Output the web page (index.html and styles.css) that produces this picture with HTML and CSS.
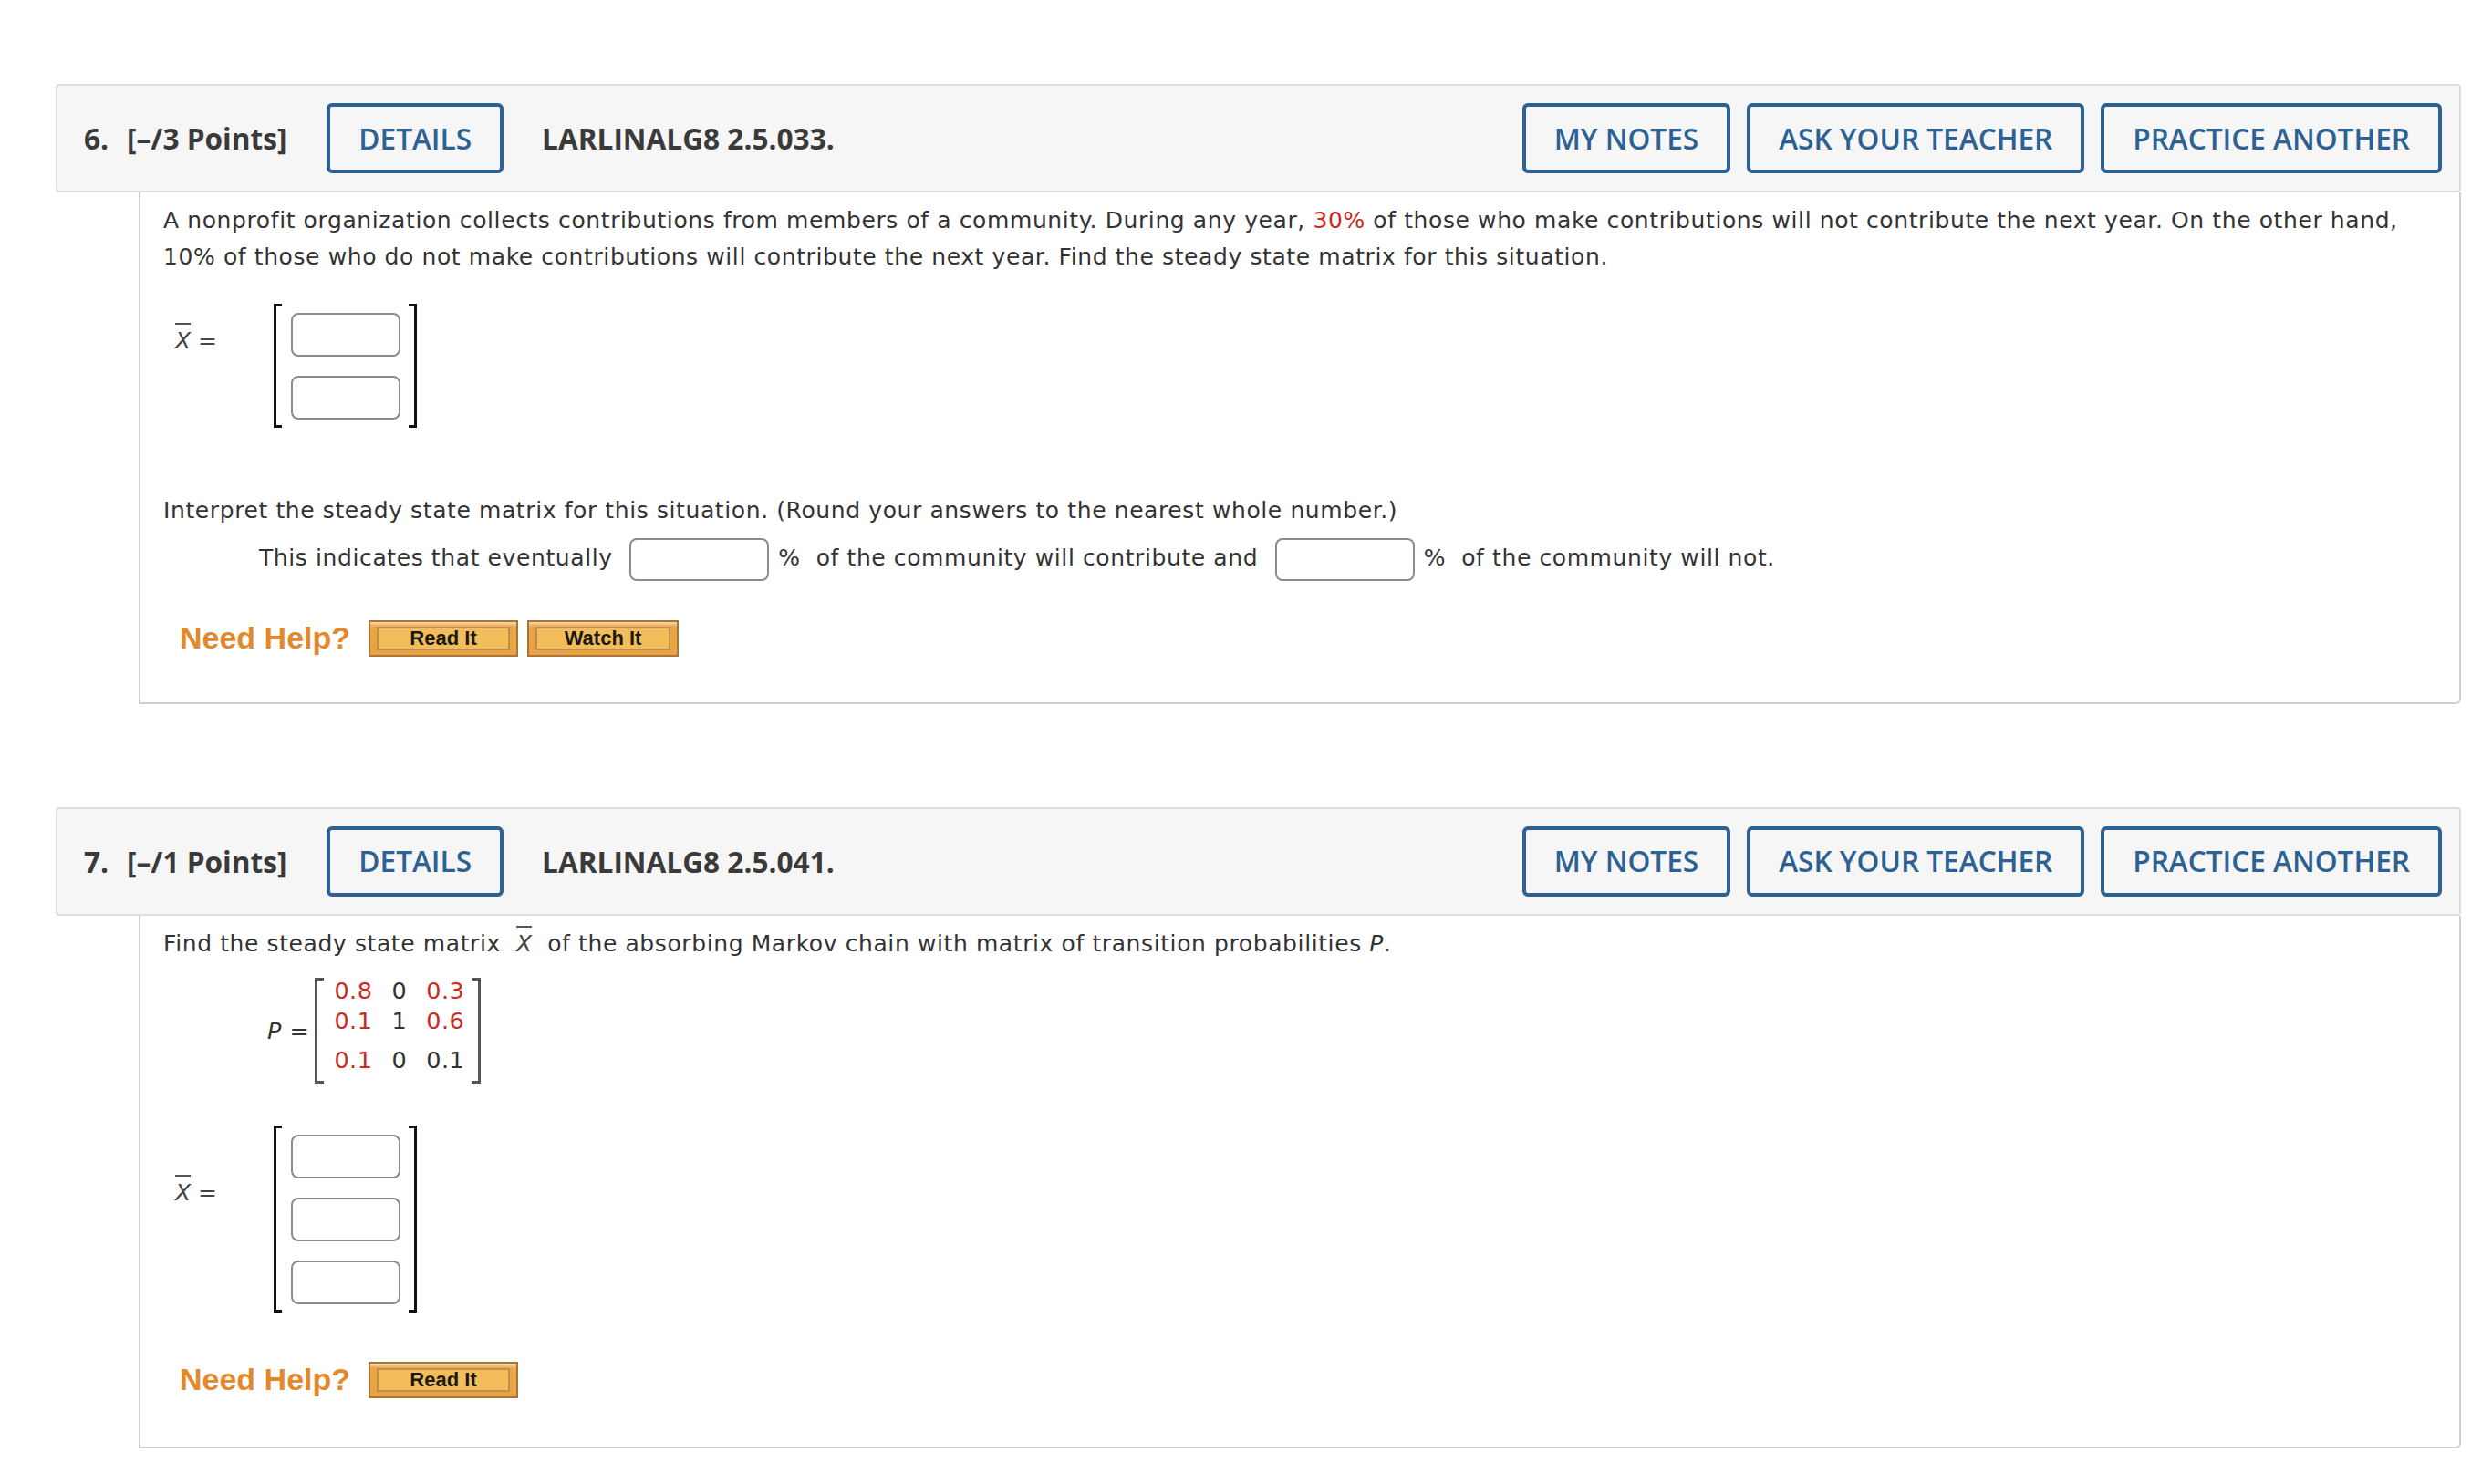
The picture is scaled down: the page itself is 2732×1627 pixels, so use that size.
FILE: index.html
```html
<!DOCTYPE html>
<html lang="en">
<head>
<meta charset="utf-8">
<title>Questions</title>
<link rel="stylesheet" href="styles.css">
</head>
<body>
<div class="page">

  <section class="question">
    <div class="qhead">
      <span class="qnum">6.</span>
      <span class="qpts">[–/3 Points]</span>
      <button class="qbtn">DETAILS</button>
      <span class="qcode">LARLINALG8 2.5.033.</span>
      <div class="qactions">
        <button class="qbtn">MY NOTES</button>
        <button class="qbtn">ASK YOUR TEACHER</button>
        <button class="qbtn">PRACTICE ANOTHER</button>
      </div>
    </div>
    <div class="qbody">
      <p class="text">A nonprofit organization collects contributions from members of a community. During any year, <span class="red">30%</span> of those who make contributions will not contribute the next year. On the other hand, 10% of those who do not make contributions will contribute the next year. Find the steady state matrix for this situation.</p>

      <div class="vec vec-a">
        <span class="vlabel"><span class="xbar">X</span> =</span>
        <div class="matrix">
          <div class="cells">
            <input class="cell" type="text">
            <input class="cell" type="text">
          </div>
        </div>
      </div>

      <p class="text interp">Interpret the steady state matrix for this situation. (Round your answers to the nearest whole number.)</p>
      <p class="text fill">This indicates that eventually <input class="blank" type="text">%&nbsp; of the community will contribute and <input class="blank" type="text">%&nbsp; of the community will not.</p>

      <div class="help help-a">
        <span class="need">Need Help?</span>
        <span class="hbtn"><span class="hbtn-in">Read It</span></span>
        <span class="hbtn wide"><span class="hbtn-in">Watch It</span></span>
      </div>
    </div>
  </section>

  <section class="question">
    <div class="qhead">
      <span class="qnum">7.</span>
      <span class="qpts">[–/1 Points]</span>
      <button class="qbtn">DETAILS</button>
      <span class="qcode">LARLINALG8 2.5.041.</span>
      <div class="qactions">
        <button class="qbtn">MY NOTES</button>
        <button class="qbtn">ASK YOUR TEACHER</button>
        <button class="qbtn">PRACTICE ANOTHER</button>
      </div>
    </div>
    <div class="qbody">
      <p class="text">Find the steady state matrix &nbsp;<span class="xbar">X</span>&nbsp; of the absorbing Markov chain with matrix of transition probabilities <i>P</i>.</p>

      <div class="pmat">
        <span class="plabel"><i>P</i> =</span>
        <div class="pgrid">
          <span class="red">0.8</span><span>0</span><span class="red">0.3</span>
          <span class="red">0.1</span><span>1</span><span class="red">0.6</span>
          <span class="red">0.1</span><span>0</span><span>0.1</span>
        </div>
      </div>

      <div class="vec vec-b">
        <span class="vlabel"><span class="xbar">X</span> =</span>
        <div class="matrix">
          <div class="cells">
            <input class="cell" type="text">
            <input class="cell" type="text">
            <input class="cell" type="text">
          </div>
        </div>
      </div>

      <div class="help help-b">
        <span class="need">Need Help?</span>
        <span class="hbtn"><span class="hbtn-in">Read It</span></span>
      </div>
    </div>
  </section>

</div>
</body>
</html>
```

FILE: styles.css
```css
* { box-sizing: border-box; }

body {
  margin: 0;
  background: #ffffff;
  font-family: "DejaVu Sans", Verdana, sans-serif;
  color: #333333;
}

.page {
  padding: 92px 34px 40px 61px;
}

.question + .question {
  margin-top: 113px;
}

/* ---------- header bar ---------- */
.qhead {
  display: flex;
  align-items: center;
  height: 119px;
  padding: 0 19px 0 29px;
  background: #f6f6f6;
  border: 2px solid #dddddd;
  border-radius: 4px;
  font-family: "Open Sans", "Liberation Sans", sans-serif;
  font-size: 31.6px;
  color: #3a3a3a;
}

.qnum { font-weight: 700; margin-right: 20px; }
.qpts { font-weight: 700; margin-right: 44px; }
.qcode { font-weight: 700; margin-left: 42px; }

.qactions {
  margin-left: auto;
  display: flex;
  gap: 18px;
}

.qbtn {
  height: 77px;
  padding: 0 31px;
  border: 4px solid #2c6194;
  border-radius: 6px;
  background: transparent;
  color: #2c6194;
  font-family: "Open Sans", "Liberation Sans", sans-serif;
  font-size: 31.6px;
  font-weight: 600;
  line-height: 1;
}

/* ---------- body ---------- */
.qbody {
  margin-left: 91px;
  border: 2px solid #cfcfcf;
  border-top: 0;
  border-bottom-right-radius: 6px;
  padding: 11px 25px 50px 25px;
}

.text {
  margin: 0;
  font-size: 25px;
  letter-spacing: 0.6px;
  line-height: 40px;
}

.red { color: #cc2a20; }

.xbar {
  display: inline-block;
  font-style: italic;
  color: #444444;
  border-top: 2px solid #555555;
  padding-top: 5px;
  line-height: 1;
  letter-spacing: 0;
}

/* vector of answer boxes */
.vec {
  display: flex;
  align-items: flex-start;
  margin-left: 13px;
  font-size: 25px;
  color: #444444;
}

.vec-a { margin-top: 31px; }
.vec-b { margin-top: 46px; }

.vlabel {
  width: 108px;
  line-height: 40px;
}
.vec-a .vlabel { margin-top: 21px; }
.vec-b .vlabel { margin-top: 54px; }

.matrix {
  display: flex;
}
.matrix::before,
.matrix::after {
  content: "";
  width: 6px;
  border: 3px solid #111111;
}
.matrix::before { border-right: 0; }
.matrix::after { border-left: 0; }

.cells {
  display: flex;
  flex-direction: column;
  gap: 21px;
  padding: 10px 9px 9px 10px;
}

.cell {
  width: 120px;
  height: 48px;
  border: 2px solid #8c8c8c;
  border-radius: 8px;
  background: #ffffff;
  margin: 0;
}

/* interpretation lines */
.interp { margin-top: 71px; }

.fill {
  margin-top: 8px;
  padding-left: 105px;
  line-height: 48px;
}

.blank {
  width: 153px;
  height: 47px;
  margin: 0 10px 0 10px;
  border: 2px solid #8c8c8c;
  border-radius: 8px;
  background: #ffffff;
  vertical-align: middle;
}

/* P matrix */
.pmat {
  display: flex;
  align-items: center;
  margin-top: 17px;
  margin-left: 114px;
  font-size: 25.5px;
  letter-spacing: 0.5px;
  color: #333333;
}

.plabel {
  margin-right: 6px;
}

.pgrid {
  display: grid;
  grid-template-columns: auto auto auto;
  grid-template-rows: 30px 36px 50px;
  column-gap: 21px;
  align-items: center;
  justify-items: center;
  padding: 0 15px 0 18px;
  border: 3px solid #555555;
  border-top: 0;
  border-bottom: 0;
  position: relative;
  line-height: 1;
}

.pgrid::before,
.pgrid::after {
  content: "";
  position: absolute;
  top: 0;
  bottom: 0;
  width: 7px;
  border-top: 3px solid #555555;
  border-bottom: 3px solid #555555;
}
.pgrid::before { left: 0; }
.pgrid::after { right: 0; }

/* need help */
.help {
  display: flex;
  align-items: center;
  margin-left: 18px;
}
.help-a { margin-top: 43px; }
.help-b { margin-top: 54px; margin-bottom: 3px; }

.need {
  font-family: "Liberation Sans", Arial, sans-serif;
  font-weight: 700;
  font-size: 34px;
  color: #e3892b;
  margin-right: 20px;
}

.hbtn {
  display: flex;
  width: 164px;
  height: 40px;
  padding: 5px 7px;
  border: 2px solid #a7743a;
  background: linear-gradient(#f7dcae 0, #eaa547 5px, #e9a244 100%);
}
.hbtn + .hbtn { margin-left: 10px; }
.hbtn.wide { width: 166px; }

.hbtn-in {
  flex: 1;
  display: flex;
  align-items: center;
  justify-content: center;
  border: 2px solid #c08f50;
  background: #f3bd5b;
  font-family: "Liberation Sans", Arial, sans-serif;
  font-weight: 700;
  font-size: 22px;
  color: #1c1a14;
}
```
